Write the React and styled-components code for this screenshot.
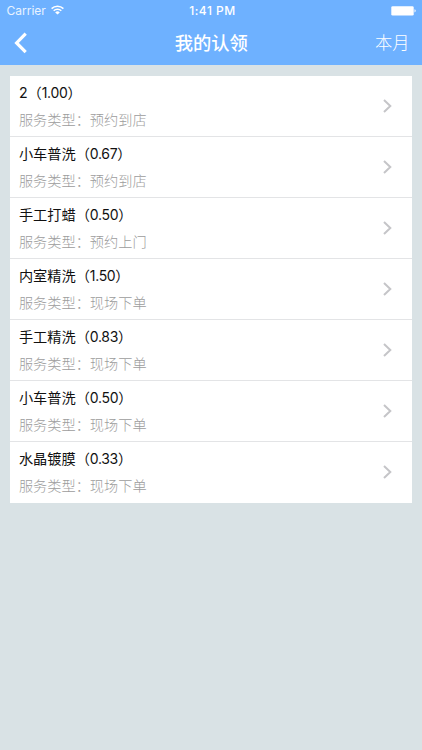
import React from 'react'
import styled, { createGlobalStyle } from 'styled-components';

const claims = [
   { id: 1, name: '2', amount: '1.00', type: '预约到店' },
   { id: 2, name: '小车普洗', amount: '0.67', type: '预约到店' },
   { id: 3, name: '手工打蜡', amount: '0.50', type: '预约上门' },
   { id: 4, name: '内室精洗', amount: '1.50', type: '现场下单' },
   { id: 5, name: '手工精洗', amount: '0.83', type: '现场下单' },
   { id: 6, name: '小车普洗', amount: '0.50', type: '现场下单' },
   { id: 7, name: '水晶镀膜', amount: '0.33', type: '现场下单' },
]

const ClaimItem = ({ name, amount, type }) => {
   return (
      <Item>
         <ItemContent>
            <Name>{name}（<Amount>{amount}</Amount>）</Name>
            <Type>服务类型：{type}</Type>
         </ItemContent>
         <Arrow viewBox="0 0 9 14">
            <path d="M1 1l6.3 6L1 13" />
         </Arrow>
      </Item>
   )
}

const App = () => {
   return (
      <>
         <GlobalStyle />
         <Screen>
            <Header>
               <StatusBar>
                  <Carrier>
                     Carrier
                     <Wifi viewBox="0 0 13 10">
                        <path d="M0.6 3.6a8.4 8.4 0 0 1 11.8 0" />
                        <path d="M2.7 5.8a5.4 5.4 0 0 1 7.6 0" />
                        <path className="dot" d="M6.5 9.6L4.2 7.4a3.3 3.3 0 0 1 4.6 0z" />
                     </Wifi>
                  </Carrier>
                  <Time>1:41 PM</Time>
                  <Battery viewBox="0 0 26 10">
                     <rect x="0.3" y="0.2" width="22.4" height="9.4" rx="1.4" />
                     <path d="M23.5 3.3c1.6 0.4 1.6 2.8 0 3.2z" />
                  </Battery>
               </StatusBar>
               <NavBar>
                  <BackIcon viewBox="0 0 14 22">
                     <path d="M11.7 1.7L2.6 10.9l9.1 9.2" />
                  </BackIcon>
                  <Title>我的认领</Title>
                  <Month>本月</Month>
               </NavBar>
            </Header>

            <List>
               {
                  claims.map((e) => {
                     return (
                        <ClaimItem key={e.id} name={e.name} amount={e.amount} type={e.type} />
                     )
                  })
               }
            </List>
         </Screen>
      </>
   )
}

export default App

const GlobalStyle = createGlobalStyle`
    * {
      box-sizing: border-box;
    }

    body {
      margin: 0;
      background: #d9e2e5;
      font-family: Inter, 'Noto Sans CJK SC', sans-serif;
    }
`;

const Screen = styled.div`
    display: flex;
    flex-direction: column;
    width: 100%;
    height: 100vh;
    overflow: hidden;
    background: #d9e2e5;
`;

const Header = styled.header`
    height: 65px;
    background: #6eb1ff;
    color: #fff;
`;

const StatusBar = styled.div`
    display: grid;
    grid-template-columns: 1fr auto 1fr;
    align-items: center;
    height: 22px;
    padding: 0 5px 0 6.5px;
`;

const Carrier = styled.div`
    display: flex;
    align-items: center;
    gap: 5.5px;
    font-size: 12px;
    line-height: 22px;
    color: #e9f3ff;
`;

const Wifi = styled.svg`
    width: 13px;
    height: 10px;
    margin-top: -2px;
    fill: none;
    stroke: #fff;
    stroke-width: 1.5;

    .dot {
      fill: #fff;
      stroke: none;
    }
`;

const Time = styled.div`
    padding-left: 1.5px;
    font-size: 12px;
    font-weight: 500;
    line-height: 22px;
    letter-spacing: 0.5px;
`;

const Battery = styled.svg`
    justify-self: end;
    width: 26px;
    height: 10px;
    fill: #fff;
`;

const NavBar = styled.nav`
    display: grid;
    grid-template-columns: 1fr auto 1fr;
    align-items: center;
    height: 42px;
    padding: 0 12.5px 0 14px;
`;

const BackIcon = styled.svg`
    width: 14px;
    height: 22px;
    fill: none;
    stroke: #fff;
    stroke-width: 3.2;
`;

const Title = styled.h1`
    margin: 0;
    padding-right: 1px;
    font-size: 18.3px;
    font-weight: 500;
    line-height: 42px;
`;

const Month = styled.div`
    justify-self: end;
    font-size: 17.3px;
    font-weight: 300;
    line-height: 42px;
`;

const List = styled.div`
    margin: 10.6px 10.4px 0;
    background: #fff;
`;

const Item = styled.div`
    display: flex;
    justify-content: space-between;
    align-items: center;
    height: 61.1px;
    padding: 0 20px 0 8.5px;
    border-bottom: 1px solid #e3e4e6;

    &:last-child {
      border-bottom-color: transparent;
    }
`;

const ItemContent = styled.div`
    display: flex;
    flex-direction: column;
`;

const Name = styled.div`
    font-size: 14.2px;
    line-height: 27px;
    color: #111;
`;

const Amount = styled.span`
    font-size: 14px;
    letter-spacing: -0.35px;
`;

const Type = styled.div`
    font-size: 14.2px;
    font-weight: 300;
    line-height: 27px;
    color: #9c9c9c;
`;

const Arrow = styled.svg`
    width: 9px;
    height: 14px;
    fill: none;
    stroke: #c5c5c8;
    stroke-width: 2;
`;
